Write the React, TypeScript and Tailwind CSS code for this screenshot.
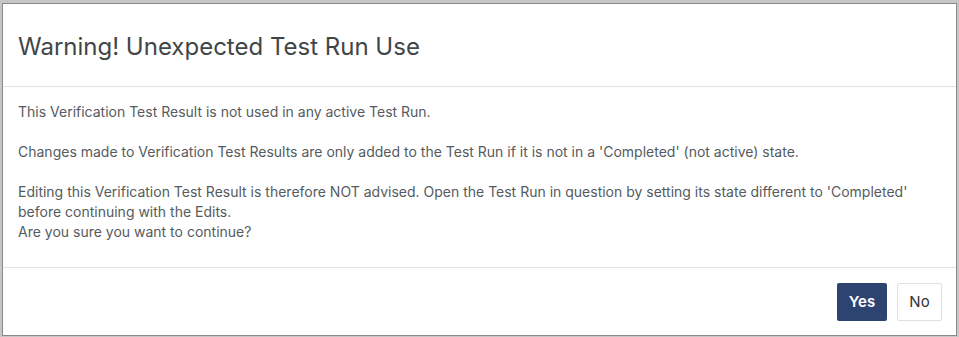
import React from 'react';

const WarningModal: React.FC = () => {
  return (
    <div className="ml-[2px] mt-[3px] w-[955px] h-[333px] bg-white border border-[#8a8a8a] flex flex-col">
      <div className="h-[83px] px-[15px] flex items-center border-b border-[#e3e3e3]">
        <h2 className="text-[24px] leading-none text-[#3f4648] pt-[3px]">Warning! Unexpected Test Run Use</h2>
      </div>
      <div className="px-[15px] pt-[15px] pb-[25px] text-[14px] leading-[20px] text-[#555b5e] border-b border-[#e3e3e3]">
        <p>This Verification Test Result is not used in any active Test Run.</p>
        <p className="mt-[20px]">
          Changes made to Verification Test Results are only added to the Test Run if it is not in a 'Completed' (not active) state.
        </p>
        <p className="mt-[20px]">
          Editing this Verification Test Result is therefore NOT advised. Open the Test Run in question by setting its state different to 'Completed' before continuing with the Edits.
        </p>
        <p>Are you sure you want to continue?</p>
      </div>
      <div className="flex-1 flex justify-end items-start gap-[10px] pt-[15px] pr-[14px]">
        <button className="h-[38px] w-[50px] rounded-[2px] bg-[#2d4470] text-white text-[15px] font-semibold">
          Yes
        </button>
        <button className="h-[38px] w-[45px] rounded-[2px] bg-white border border-[#e0e0e0] text-[#333] text-[15px]">
          No
        </button>
      </div>
    </div>
  );
};

export default function App() {
  return (
    <div className="w-[959px] h-[337px] bg-[#c6c6c6] overflow-hidden" style={{ fontFamily: 'Inter, "Noto Sans", sans-serif' }}>
      <WarningModal />
    </div>
  );
}
